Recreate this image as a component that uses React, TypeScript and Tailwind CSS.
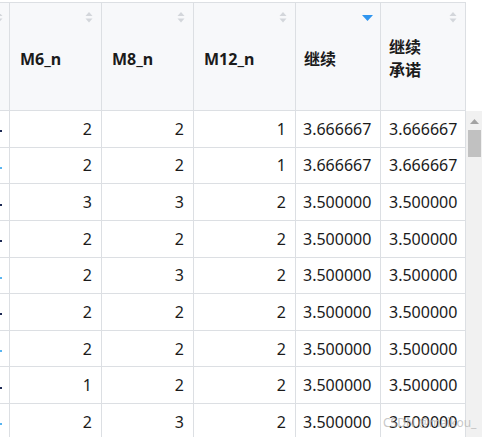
import React from "react";

type Row = [number, number, number, string, string, boolean];

// last flag: whether the clipped left-column mark is blue
const rows: Row[] = [
  [2, 2, 1, "3.666667", "3.666667", false],
  [2, 2, 1, "3.666667", "3.666667", true],
  [3, 3, 2, "3.500000", "3.500000", false],
  [2, 2, 2, "3.500000", "3.500000", false],
  [2, 3, 2, "3.500000", "3.500000", true],
  [2, 2, 2, "3.500000", "3.500000", false],
  [2, 2, 2, "3.500000", "3.500000", true],
  [1, 2, 2, "3.500000", "3.500000", false],
  [2, 3, 2, "3.500000", "3.500000", true],
];

function SortIcon() {
  return (
    <svg width="8" height="11" viewBox="0 0 8 11" className="absolute top-[9px] right-[8px]">
      <path d="M4 0 L7.5 4 L0.5 4 Z" fill="#d3d6db" />
      <path d="M0.5 6.5 L7.5 6.5 L4 10.5 Z" fill="#d3d6db" />
    </svg>
  );
}

function SortDesc() {
  return (
    <svg width="11" height="6" viewBox="0 0 11 6" className="absolute top-[12px] right-[7px]">
      <path d="M0 0 L11 0 L5.5 6 Z" fill="#2f95ef" />
    </svg>
  );
}

const cols = "grid grid-cols-[10px_92px_92px_102px_85px_85px]";

export default function App() {
  return (
    <div
      className="relative w-[482px] h-[437px] overflow-hidden bg-white text-[16px] text-[#1b1b1b]"
      style={{ fontFamily: '"Noto Sans", "Noto Sans CJK SC", sans-serif' }}
    >
      <div className="flex pt-[2px]">
        <div className="w-[466px]">
          <div className={`${cols} h-[109px] border-t border-b border-[#dcdfe3] bg-[#f7f8fa] font-bold`}>
            <div className="relative overflow-hidden border-r border-[#dcdfe3]">
              <svg width="8" height="11" viewBox="0 0 8 11" className="absolute top-[9px] left-[-5px]">
                <path d="M4 0 L7.5 4 L0.5 4 Z" fill="#d3d6db" />
                <path d="M0.5 6.5 L7.5 6.5 L4 10.5 Z" fill="#d3d6db" />
              </svg>
            </div>
            {["M6_n", "M8_n", "M12_n"].map((h) => (
              <div key={h} className="relative flex items-center pl-[10px] pt-[4px] border-r border-[#dcdfe3]">
                <SortIcon />
                {h}
              </div>
            ))}
            <div className="relative flex items-center pl-[8px] pt-[4px] border-r border-[#dcdfe3]">
              <SortDesc />
              继续
            </div>
            <div className="relative flex items-center pl-[8px] pt-[4px] leading-[23px] border-r border-[#dcdfe3]">
              <SortIcon />
              <span>
                继续
                <br />
                承诺
              </span>
            </div>
          </div>
          {rows.map((r, i) => (
            <div key={i} className={`${cols} h-[36.625px] border-b border-[#dcdfe3]`}>
              <div className="flex items-center border-r border-[#dcdfe3]">
                <span className={`mt-[5px] w-[2px] h-[2px] ${r[5] ? "bg-[#59b4f0]" : "bg-[#1d2a55]"}`} />
              </div>
              <div className="flex items-center justify-end pr-[9px] border-r border-[#dcdfe3]">{r[0]}</div>
              <div className="flex items-center justify-end pr-[9px] border-r border-[#dcdfe3]">{r[1]}</div>
              <div className="flex items-center justify-end pr-[9px] border-r border-[#dcdfe3]">{r[2]}</div>
              <div className="flex items-center pl-[7px] border-r border-[#dcdfe3]">{r[3]}</div>
              <div className="flex items-center pl-[8px] border-r border-[#dcdfe3]">{r[4]}</div>
            </div>
          ))}
        </div>
        <div className="w-[16px] flex flex-col">
          <div className="h-[109px]" />
          <div className="flex-1 bg-[#f1f1f1] flex flex-col items-center pt-[8px] h-[330px]">
            <svg width="9" height="5" viewBox="0 0 9 5">
              <path d="M4.5 0 L9 5 L0 5 Z" fill="#a3a3a3" />
            </svg>
            <div className="mt-[6px] w-[13px] h-[27px] bg-[#c1c1c1]" />
          </div>
        </div>
      </div>
      <div className="absolute left-[383px] top-[416px] whitespace-nowrap text-[12px] leading-[14px] text-[#b8b8b8]/80">
        CSDN @maikou_
      </div>
    </div>
  );
}
